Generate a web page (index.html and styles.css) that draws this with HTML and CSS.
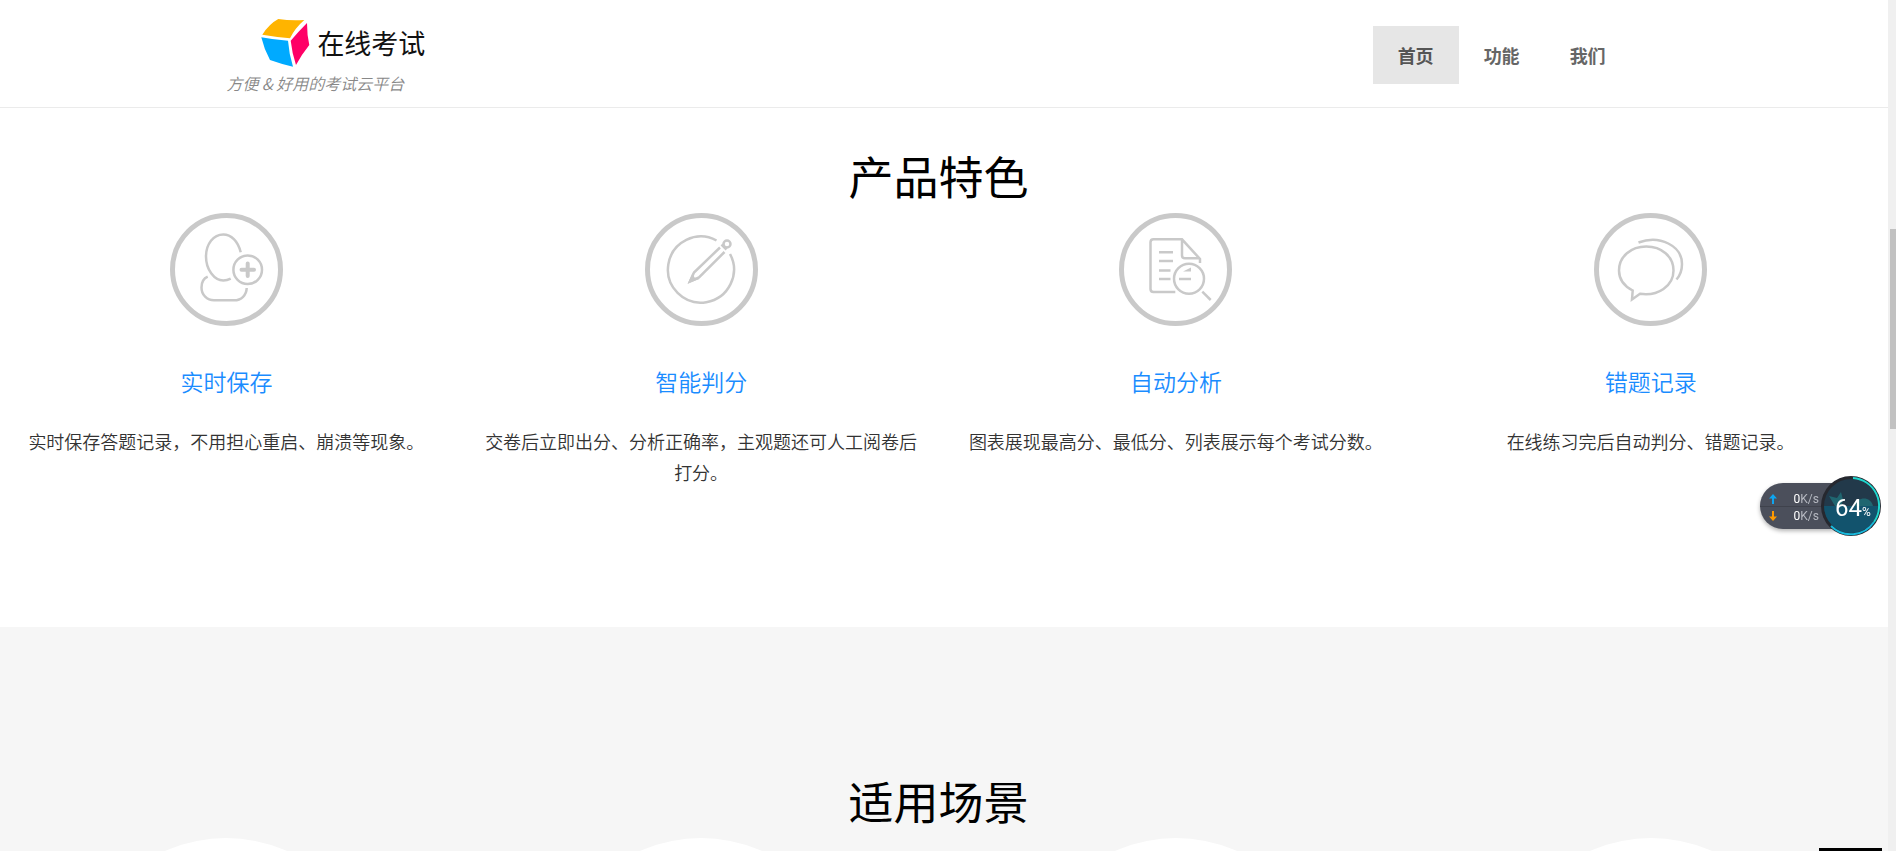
FILE: index.html
```
<!DOCTYPE html>
<html lang="zh-CN">
<head>
    <meta charset="UTF-8">
    <meta name="viewport" content="width=device-width, initial-scale=1.0">
    <title>在线考试</title>
    <link rel="stylesheet" href="styles.css">
</head>
<body>
    <div class="page">
        <header class="header">
            <div class="header-inner">
                <div class="brand">
                    <a class="logo" href="#">
                        <svg width="50" height="50" viewBox="0 0 50 50" aria-hidden="true">
                            <path fill="#ffb400" d="M1.3 16.7Q8 6 17.3 1Q30 3 43.3 2Q34 10 29 20.3Q15 19 1.3 16.7Z"/>
                            <path fill="#00aaff" d="M0.3 19.3Q14 22 27 22.7Q28 36 32 48.7Q20 46 9 42Q3 31 0.3 19.3Z"/>
                            <path fill="#ff0066" d="M46 5Q46 17 48.3 27Q41 36 35 47Q31 35 29.7 22.7Q37 14 46 5Z"/>
                        </svg>
                        <span>在线考试</span>
                    </a>
                    <p class="tagline">方便 &amp; 好用的考试云平台</p>
                </div>
                <nav class="nav">
                    <a class="active" href="#">首页</a>
                    <a href="#features">功能</a>
                    <a href="#about">我们</a>
                </nav>
            </div>
        </header>

        <section class="features" id="features">
            <h2>产品特色</h2>
            <div class="row">
                <div class="feature">
                    <svg class="icon" viewBox="0 0 113 113" aria-hidden="true">
                        <circle class="ring" cx="56.5" cy="56.5" r="54"/>
                        <path d="M70.7 39.3C68 28 61 21.5 53.3 21.5C43.5 21.5 36 31 36 43.5C36 57 44.5 67.5 53.3 67.5C56 67.5 58.5 66.8 60.7 65.7"/>
                        <path d="M37.7 63.7C33.5 65.5 31.5 69.5 31.5 74.5C31.5 82 37 87.3 44 87.3H64C71.5 87.3 76.5 82 76.7 75"/>
                        <circle cx="77.7" cy="56.7" r="14.3"/>
                        <path class="thick" d="M71.5 56.7H84M77.7 50.5V63"/>
                    </svg>
                    <h3>实时保存</h3>
                    <p>实时保存答题记录，不用担心重启、崩溃等现象。</p>
                </div>
                <div class="feature">
                    <svg class="icon" viewBox="0 0 113 113" aria-hidden="true">
                        <circle class="ring" cx="56.5" cy="56.5" r="54"/>
                        <path d="M71.5 27.5A33 33 0 1 0 85 41"/>
                        <path d="M75 34.5L49 59.5L45 68.5L54 64.5L79.5 39"/>
                        <path class="solid" d="M42.7 70.5L47.5 60L49.5 64.5L54.5 66Z"/>
                        <path d="M76.5 31.5L81.5 36.5"/>
                        <circle cx="82" cy="31" r="3.5"/>
                    </svg>
                    <h3>智能判分</h3>
                    <p>交卷后立即出分、分析正确率，主观题还可人工阅卷后打分。</p>
                </div>
                <div class="feature">
                    <svg class="icon" viewBox="0 0 113 113" aria-hidden="true">
                        <circle class="ring" cx="56.5" cy="56.5" r="54"/>
                        <path d="M56.3 79H34.5Q31.5 79 31.5 76V29.3Q31.5 26.3 34.5 26.3H63L81 46V50M63 26.3V42.5Q63 45.3 66 45.3H80"/>
                        <path d="M40 39.3H54M40 48H54M40 57.5H51.5M40 66H51.5M60 66H72"/>
                        <path class="solid" d="M64 58.5L72 54.5V58.5Z"/>
                        <circle cx="70" cy="65.7" r="15"/>
                        <path d="M83.3 78.7L91.7 87"/>
                    </svg>
                    <h3>自动分析</h3>
                    <p>图表展现最高分、最低分、列表展示每个考试分数。</p>
                </div>
                <div class="feature">
                    <svg class="icon" viewBox="0 0 113 113" aria-hidden="true">
                        <circle class="ring" cx="56.5" cy="56.5" r="54"/>
                        <path d="M38.7 77.5C30 73 25 66 25 57.5C25 43.5 37 33.5 52.3 33.5C67.5 33.5 79.5 43.5 79.5 57.5C79.5 73 64 83.5 46 80.8L38 86.5Z"/>
                        <path d="M44.5 29.5C66 21.5 88 33 88 51C88 57 86 62.5 82.5 66.5"/>
                    </svg>
                    <h3>错题记录</h3>
                    <p>在线练习完后自动判分、错题记录。</p>
                </div>
            </div>
        </section>

        <section class="scenes">
            <h2>适用场景</h2>
            <div class="row">
                <div class="scene"></div>
                <div class="scene"></div>
                <div class="scene"></div>
                <div class="scene"></div>
            </div>
        </section>
    </div>

    <!-- network speed widget -->
    <div class="monitor">
        <div class="speeds">
            <div class="speed">
                <svg width="8" height="10" viewBox="0 0 8 10" aria-hidden="true"><path fill="#0fa5f0" d="M4 0L8 4.500H5V10H3V4.500H0Z"/></svg>
                <span><b>0</b>K/s</span>
            </div>
            <div class="speed">
                <svg width="8" height="10" viewBox="0 0 8 10" aria-hidden="true"><path fill="#ff9a00" d="M4 10L8 5.500H5V0H3V5.500H0Z"/></svg>
                <span><b>0</b>K/s</span>
            </div>
        </div>
        <div class="gauge">
            <svg viewBox="0 0 60 60" aria-hidden="true">
                <circle cx="30" cy="30" r="30" fill="#26282f"/>
                <circle cx="30" cy="30" r="27" fill="#22394a"/>
                <path fill="#12536d" d="M3 30H57A27 27 0 0 1 3 30Z"/>
                <path fill="#1f6670" d="M8 20L16 22L20 16L22 24L20 30H14ZM34 30C36 20 50 20 52 30Z"/>
                <path fill="none" stroke="#1fd6cf" stroke-width="2" d="M32 2A28 28 0 0 1 53 46"/>
                <path fill="none" stroke="#17b9dd" stroke-width="2" d="M53 46A28 28 0 0 1 10 50"/>
            </svg>
            <div class="percent">64<small>%</small></div>
        </div>
    </div>

    <div class="dock"></div>
    <div class="scrollbar"><div class="thumb"></div></div>
</body>
</html>
```
FILE: styles.css
```
* {
    box-sizing: border-box;
}
body {
    margin: 0;
    height: 100vh;
    overflow: hidden;
    background-color: #fff;
    color: #333;
    font-family: "Noto Sans CJK SC", sans-serif;
    font-size: 18px;
    font-weight: 350;
}
h2, h3, p {
    margin: 0;
    font-weight: 350;
}
.page {
    height: 100vh;
    margin-left: -11px;
    margin-right: 8px;
    overflow: hidden;
}
.header {
    height: 108px;
    border-bottom: 1px solid #ebebeb;
}
.header-inner {
    display: flex;
    justify-content: space-between;
    width: 75%;
    margin: 0 auto;
}
.brand {
    padding-top: 19px;
}
.logo {
    display: flex;
    align-items: center;
    gap: 6px;
    height: 48px;
    padding-left: 35px;
    color: #111;
    font-size: 27px;
    font-weight: 400;
    line-height: 32px;
    text-decoration: none;
}
.tagline {
    color: #888;
    font-size: 16px;
    font-style: italic;
    line-height: 32px;
}
.nav {
    display: flex;
    padding: 26px 20px 0 0;
}
.nav a {
    height: 58px;
    padding: 0 25px;
    color: #666;
    font-weight: 700;
    line-height: 58px;
    text-decoration: none;
}
.nav a.active {
    background-color: #e6e6e6;
    color: #555;
}
.features {
    padding: 43px 0 139px;
}
.scenes {
    padding: 149px 0;
    background-color: #f6f6f6;
}
h2 {
    margin-bottom: 12px;
    color: #000;
    font-size: 45px;
    font-weight: 400;
    line-height: 50px;
    text-align: center;
}
.row {
    display: grid;
    grid-template-columns: repeat(4, 1fr);
}
.feature {
    padding: 0 19px;
    text-align: center;
}
.icon {
    display: block;
    width: 113px;
    height: 113px;
    margin: 0 auto;
    fill: none;
    stroke: #c9c9c9;
    stroke-width: 2.5;
}
.icon .ring {
    stroke-width: 5;
}
.icon .thick {
    stroke-width: 4;
    stroke-linecap: round;
}
.icon .solid {
    fill: #c9c9c9;
    stroke: none;
}
.feature h3 {
    margin: 40px 0 30px;
    color: #1a8cff;
    font-size: 23px;
    line-height: 30px;
}
.feature p {
    line-height: 31px;
}
.scene {
    width: 300px;
    height: 300px;
    margin: 0 auto;
    border-radius: 50%;
    background-color: #fff;
}
.monitor {
    position: fixed;
    top: 476px;
    right: 15px;
    display: flex;
    align-items: center;
    font-family: Roboto, sans-serif;
}
.speeds {
    width: 76px;
    height: 46px;
    margin-right: -15px;
    border-radius: 23px 0 0 23px;
    background-color: #4b4f5b;
    box-shadow: 0 2px 4px rgba(0, 0, 0, 0.3);
}
.speed {
    display: flex;
    align-items: center;
    justify-content: space-between;
    height: 23px;
    padding: 8px 17px 0 9px;
    color: #b5b8c0;
    font-size: 12px;
    font-weight: 400;
    line-height: 16px;
}
.speed + .speed {
    padding: 0 17px 4px 9px;
    border-top: 1px solid #3f424c;
}
.speed b {
    color: #fff;
    font-weight: 400;
}
.gauge {
    position: relative;
    width: 60px;
    height: 60px;
}
.percent {
    position: absolute;
    inset: 0;
    padding-left: 4px;
    color: #fff;
    font-size: 24px;
    font-weight: 400;
    line-height: 64px;
    text-align: center;
}
.percent small {
    font-size: 12px;
}
.dock {
    position: fixed;
    right: 14px;
    bottom: 0;
    width: 63px;
    height: 3px;
    background-color: #000;
}
.scrollbar {
    position: fixed;
    top: 0;
    right: 0;
    width: 8px;
    height: 100vh;
    padding: 229px 0 0 2px;
    background-color: #f0f0f0;
}
.thumb {
    height: 200px;
    background-color: #c1c1c1;
}
```
